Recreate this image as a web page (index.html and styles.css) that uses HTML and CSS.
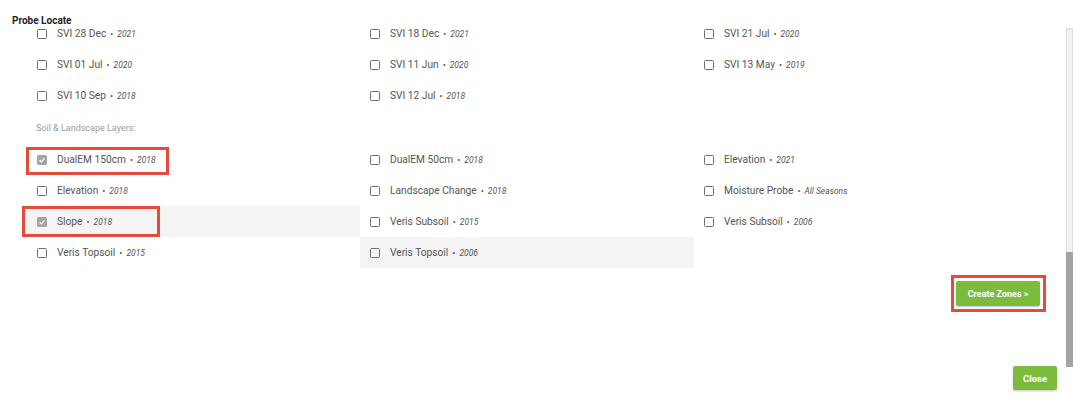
FILE: index.html
```html
<!DOCTYPE html>
<html>
<head>
<meta charset="utf-8">
<link rel="stylesheet" href="styles.css">
</head>
<body>
<div class="window">
  <div class="main">
    <div class="content">
      <div class="title">Probe Locate</div>
      <div class="grid">
        <label class="item"><span class="cb"></span><span class="name">SVI 28 Dec</span><span class="dot">•</span><span class="year">2021</span></label>
        <label class="item"><span class="cb"></span><span class="name">SVI 18 Dec</span><span class="dot">•</span><span class="year">2021</span></label>
        <label class="item"><span class="cb"></span><span class="name">SVI 21 Jul</span><span class="dot">•</span><span class="year">2020</span></label>
        <label class="item"><span class="cb"></span><span class="name">SVI 01 Jul</span><span class="dot">•</span><span class="year">2020</span></label>
        <label class="item"><span class="cb"></span><span class="name">SVI 11 Jun</span><span class="dot">•</span><span class="year">2020</span></label>
        <label class="item"><span class="cb"></span><span class="name">SVI 13 May</span><span class="dot">•</span><span class="year">2019</span></label>
        <label class="item"><span class="cb"></span><span class="name">SVI 10 Sep</span><span class="dot">•</span><span class="year">2018</span></label>
        <label class="item"><span class="cb"></span><span class="name">SVI 12 Jul</span><span class="dot">•</span><span class="year">2018</span></label>
        <div class="item empty"></div>
        <div class="section">Soil &amp; Landscape Layers:</div>
        <label class="item"><span class="cb checked"><svg viewBox="0 0 10 10" width="10" height="10"><path d="M2.6 5.2 L4.3 6.8 L7.5 3.4" fill="none" stroke="#fff" stroke-width="1.2"/></svg></span><span class="name">DualEM 150cm</span><span class="dot">•</span><span class="year">2018</span><span class="mark mark-dual"></span></label>
        <label class="item"><span class="cb"></span><span class="name">DualEM 50cm</span><span class="dot">•</span><span class="year">2018</span></label>
        <label class="item"><span class="cb"></span><span class="name">Elevation</span><span class="dot">•</span><span class="year">2021</span></label>
        <label class="item"><span class="cb"></span><span class="name">Elevation</span><span class="dot">•</span><span class="year">2018</span></label>
        <label class="item"><span class="cb"></span><span class="name">Landscape Change</span><span class="dot">•</span><span class="year">2018</span></label>
        <label class="item"><span class="cb"></span><span class="name">Moisture Probe</span><span class="dot">•</span><span class="year">All Seasons</span></label>
        <label class="item hl"><span class="cb checked"><svg viewBox="0 0 10 10" width="10" height="10"><path d="M2.6 5.2 L4.3 6.8 L7.5 3.4" fill="none" stroke="#fff" stroke-width="1.2"/></svg></span><span class="name">Slope</span><span class="dot">•</span><span class="year">2018</span><span class="mark mark-slope"></span></label>
        <label class="item"><span class="cb"></span><span class="name">Veris Subsoil</span><span class="dot">•</span><span class="year">2015</span></label>
        <label class="item"><span class="cb"></span><span class="name">Veris Subsoil</span><span class="dot">•</span><span class="year">2006</span></label>
        <label class="item"><span class="cb"></span><span class="name">Veris Topsoil</span><span class="dot">•</span><span class="year">2015</span></label>
        <label class="item hl"><span class="cb"></span><span class="name">Veris Topsoil</span><span class="dot">•</span><span class="year">2006</span></label>
      </div>
      <div class="actions">
        <span class="highlight-box"><button class="btn btn-create">Create Zones »</button></span>
      </div>
    </div>
    <div class="scrollbar"><div class="thumb"></div></div>
  </div>
  <div class="footer">
    <button class="btn btn-close">Close</button>
  </div>
</div>
</body>
</html>
```
FILE: styles.css
```css
* { box-sizing: border-box; }
html, body { margin: 0; padding: 0; background: #fff; }
body {
  font-family: Roboto, "Liberation Sans", Arial, sans-serif;
  color: #444;
  width: 1073px;
  height: 405px;
  overflow: hidden;
}
.window { display: flex; flex-direction: column; height: 405px; }
.main { display: flex; height: 366px; }
.content { flex: 1; min-width: 0; }
.title {
  font-size: 10px;
  font-weight: 700;
  line-height: 12px;
  color: #222;
  padding: 15px 0 0 12px;
  margin-bottom: -9px;
}
.grid {
  display: grid;
  grid-template-columns: 338px 334px 334px;
  grid-template-rows: 31px 31px 31px 33px 31px 31px 31px 31px;
  margin-left: 22px;
}
.item {
  position: relative;
  display: flex;
  align-items: center;
  padding-left: 10px;
  color: #555;
  white-space: nowrap;
}
.item:nth-child(3n+1) { padding-left: 15px; }
.grid .section ~ .item:nth-child(3n+1) { padding-left: 10px; }
.grid .section ~ .item:nth-child(3n+2) { padding-left: 15px; }
.item.hl { background: #f4f4f4; }
.name { font-size: 10.2px; }
.cb {
  width: 10px;
  height: 10px;
  border: 1.5px solid #6e6e6e;
  border-radius: 1.5px;
  margin-right: 10px;
  flex: none;
  display: flex;
  align-items: center;
  justify-content: center;
}
.cb.checked {
  border: none;
  background: #a6a6a6;
}
.cb svg { display: block; }
.dot { margin: 0 4px 0 4px; font-size: 9px; color: #555; }
.year { font-style: italic; font-size: 8.5px; color: #555; }
.section {
  grid-column: 1 / -1;
  height: 33px;
  display: flex;
  align-items: center;
  padding-left: 14px;
  font-size: 9px;
  color: #9a9a9a;
}
.mark {
  position: absolute;
  border: 3px solid #e44b3a;
  pointer-events: none;
}
.mark-dual { left: 4px; top: 3px; width: 143px; height: 28px; }
.mark-slope { left: 0; top: 0; width: 138px; height: 31px; }
.actions {
  display: flex;
  justify-content: flex-end;
  padding-right: 20px;
  margin-top: 7px;
}
.highlight-box {
  display: flex;
  border: 3px solid #e44b3a;
  padding: 3px 3px 3px 2px;
}
.btn {
  font-family: Roboto, "Liberation Sans", Arial, sans-serif;
  font-weight: 700;
  color: #fff;
  background: #7cbc3c;
  border: none;
  border-radius: 2px;
  box-shadow: 0 1px 2px rgba(0,0,0,0.25);
  cursor: pointer;
}
.btn-create {
  width: 84px;
  height: 25px;
  font-size: 9px;
}
.scrollbar {
  width: 7px;
  margin-top: 28px;
  height: 339px;
  background: #f1f1f1;
  border: 1px solid #dcdcdc;
  display: flex;
  flex-direction: column;
  justify-content: flex-end;
}
.thumb { height: 115px; background: #a3a3a3; margin: 0 -1px -1px; }
.footer {
  display: flex;
  justify-content: flex-end;
  padding-right: 16px;
}
.btn-close {
  width: 44px;
  height: 24px;
  font-size: 9.5px;
}
```
